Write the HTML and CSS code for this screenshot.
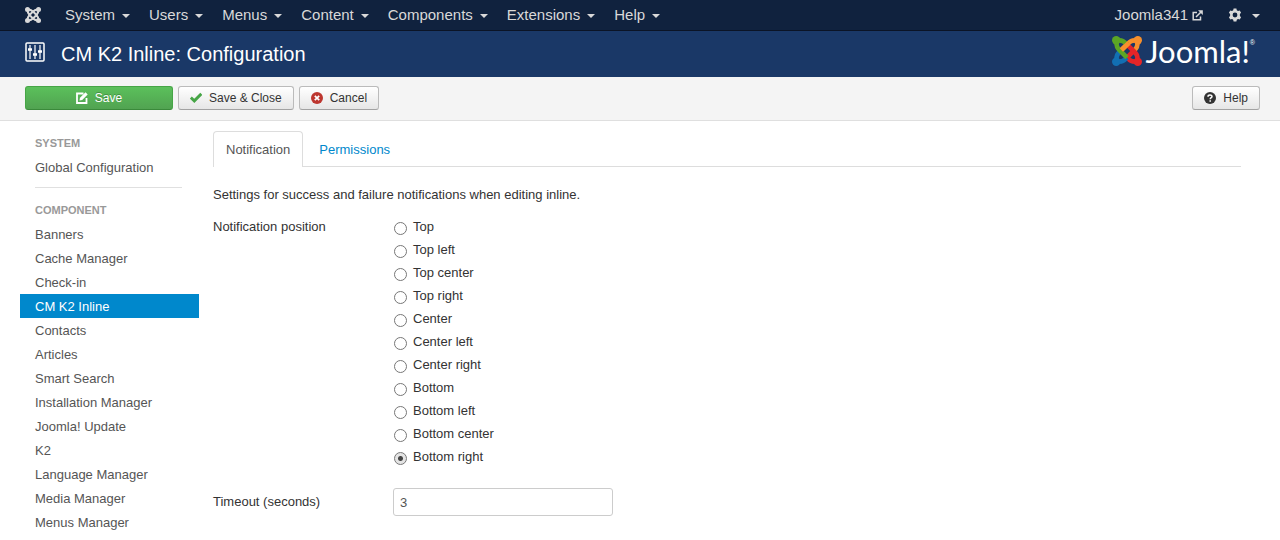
FILE: index.html
```html
<!DOCTYPE html>
<html lang="en">
<head>
<meta charset="utf-8">
<title>CM K2 Inline: Configuration</title>
<link rel="stylesheet" href="styles.css">
</head>
<body>
<nav class="navbar" aria-label="Main">
  <a class="brand" href="#" aria-label="Joomla">
    <svg class="brand-icon" viewBox="0 0 32 32" fill="none" stroke="currentColor" stroke-width="4">
      <path d="M5 5C5 11 6 13 9 16L17 24M27 5C21 5 19 6 16 9L8 17M27 27C27 21 26 19 23 16L15 8M5 27C11 27 13 26 16 23L24 15"/>
      <path d="M5 5C10 5 13 6 16 9M27 5C27 10 26 13 23 16M27 27C22 27 19 26 16 23M5 27C5 22 6 19 9 16"/>
      <g fill="currentColor" stroke="none"><circle cx="5" cy="5" r="5"/><circle cx="27" cy="5" r="5"/><circle cx="27" cy="27" r="5"/><circle cx="5" cy="27" r="5"/></g>
    </svg>
  </a>
  <a class="menu" href="#">System</a>
  <a class="menu" href="#">Users</a>
  <a class="menu" href="#">Menus</a>
  <a class="menu" href="#">Content</a>
  <a class="menu" href="#">Components</a>
  <a class="menu" href="#">Extensions</a>
  <a class="menu" href="#">Help</a>
  <div class="nav-right">
    <a class="site-link" href="#">Joomla341
      <svg class="out-icon" viewBox="0 0 11 11" fill="none" stroke="currentColor" stroke-width="1.5"><path d="M5 2.5H1.2v7.3h7.3V6.5M4 7L9 2"/><path d="M6 .2h4.8V5z" fill="currentColor" stroke="none"/></svg>
    </a>
    <a class="menu" href="#" aria-label="Settings">
      <svg class="gear-icon" viewBox="0 0 14 14"><path fill="currentColor" fill-rule="evenodd" d="M5.6.5h2.8l.4 1.7 1.2.7 1.7-.5 1.4 2.4L11.900 6v2l1.2 1.200-1.400 2.400-1.700-.5-1.200.7-.4 1.700H5.600l-.4-1.700-1.200-.7-1.700.5L.9 9.200 2.100 8V6L.9 4.800l1.400-2.400 1.700.5 1.200-.7zM7 4.600a2.400 2.400 0 1 0 0 4.800 2.400 2.400 0 0 0 0-4.800z"/></svg>
    </a>
  </div>
</nav>
<header class="header">
  <svg class="equalizer" viewBox="0 0 20 20" fill="none" stroke="currentColor"><rect x="1" y="1" width="18" height="18" rx="1" stroke-width="1.5"/><path d="M5 3v14M10 3v14M15 3v14" stroke-width="1.200"/><path d="M3 7.500h4M8 12.500h4M13 9.500h4" stroke-width="2.400"/></svg>
  <h1>CM K2 Inline: Configuration</h1>
  <a class="logo" href="#">
    <svg class="logo-mark" viewBox="0 0 32 32" fill="none" stroke-width="5">
      <g stroke="#f8902c"><path d="M27 5C21 4 19 6 16 9L9 16"/><path d="M27 5C28 11 26 13 23 16"/></g>
      <g stroke="#e42528"><path d="M27 27C28 21 26 19 23 16L17 10"/><path d="M27 27C21 28 19 26 16 23"/></g>
      <g stroke="#126fb3"><path d="M5 27C11 28 13 26 16 23"/><path d="M5 27C4 21 6 19 9 16"/></g>
      <path d="M16 23L23 16" stroke="#e42528"/>
      <g stroke="#5ba525"><path d="M5 5C4 11 6 13 9 16L16 23"/><path d="M5 5C11 4 13 6 16 9"/></g>
      <path d="M18 7.500L10 15" stroke="#f8902c"/>
      <circle cx="4.500" cy="4.500" r="4.500" fill="#5ba525"/>
      <circle cx="27.500" cy="4.500" r="4.500" fill="#f8902c"/>
      <circle cx="27.500" cy="27.500" r="4.500" fill="#e42528"/>
      <circle cx="4.500" cy="27.500" r="4.500" fill="#126fb3"/>
    </svg>
    <span class="logo-text">Joomla!</span><span class="logo-reg">®</span>
  </a>
</header>
<div class="toolbar">
  <button class="btn btn-save" type="button">
    <svg class="btn-icon" viewBox="0 0 12 12" fill="none" stroke="currentColor"><path d="M7.500 1.500H1v9.500h9.500V6" stroke-width="1.800"/><path d="M3.500 8.500l.5-2.700L9.500.3l2.200 2.200L6.200 8z" fill="currentColor" stroke="none"/></svg>Save</button>
  <button class="btn" type="button">
    <svg class="btn-icon green" viewBox="0 0 12 12"><path d="M.8 5.600L4.300 8.900 11.300 1.900" fill="none" stroke="currentColor" stroke-width="2.900"/></svg>Save &amp; Close</button>
  <button class="btn" type="button">
    <svg class="btn-icon red" viewBox="0 0 12 12"><circle cx="6" cy="6" r="6" fill="currentColor"/><path d="M3.800 3.800l4.400 4.400M8.200 3.800L3.800 8.200" stroke="#fff" stroke-width="1.700"/></svg>Cancel</button>
  <button class="btn btn-help" type="button">
    <svg class="btn-icon" viewBox="0 0 12 12"><circle cx="6" cy="6" r="6" fill="currentColor"/><path d="M4 4.700C4 2.500 8 2.500 8 4.600 8 5.800 6.200 5.700 6.200 7.300M6.200 8.200v1.500" fill="none" stroke="#fff" stroke-width="1.500"/></svg>Help</button>
</div>
<div class="content">
  <nav class="sidebar" aria-label="Components">
    <h2>System</h2>
    <a href="#">Global Configuration</a>
    <hr>
    <h2>Component</h2>
    <a href="#">Banners</a>
    <a href="#">Cache Manager</a>
    <a href="#">Check-in</a>
    <a class="active" href="#">CM K2 Inline</a>
    <a href="#">Contacts</a>
    <a href="#">Articles</a>
    <a href="#">Smart Search</a>
    <a href="#">Installation Manager</a>
    <a href="#">Joomla! Update</a>
    <a href="#">K2</a>
    <a href="#">Language Manager</a>
    <a href="#">Media Manager</a>
    <a href="#">Menus Manager</a>
  </nav>
  <main class="main">
    <div class="tabs">
      <a class="tab active" href="#">Notification</a>
      <a class="tab" href="#">Permissions</a>
    </div>
    <p class="intro">Settings for success and failure notifications when editing inline.</p>
    <form>
      <div class="field" role="radiogroup" aria-labelledby="position-label">
        <span class="field-label" id="position-label">Notification position</span>
        <div class="radios">
          <label><input type="radio" name="position">Top</label>
          <label><input type="radio" name="position">Top left</label>
          <label><input type="radio" name="position">Top center</label>
          <label><input type="radio" name="position">Top right</label>
          <label><input type="radio" name="position">Center</label>
          <label><input type="radio" name="position">Center left</label>
          <label><input type="radio" name="position">Center right</label>
          <label><input type="radio" name="position">Bottom</label>
          <label><input type="radio" name="position">Bottom left</label>
          <label><input type="radio" name="position">Bottom center</label>
          <label><input type="radio" name="position" checked>Bottom right</label>
        </div>
      </div>
      <div class="field field-text">
        <label class="field-label" for="timeout">Timeout (seconds)</label>
        <input class="text-input" id="timeout" type="text" value="3">
      </div>
    </form>
  </main>
</div>
</body>
</html>
```
FILE: styles.css
```css
* { box-sizing: border-box; }
body {
  margin: 0;
  background: #fff;
  color: #333;
  font: 13px/18px "Liberation Sans", Arial, sans-serif;
}
a { text-decoration: none; }

.navbar {
  display: flex;
  align-items: center;
  gap: 19px;
  height: 31px;
  padding: 0 20px 0 25px;
  background: #10223e;
  border-bottom: 1px solid #0b1426;
  font-size: 15px;
}
.navbar a { color: #d9d9d9; }
.brand { display: flex; margin-right: 5px; }
.brand-icon { width: 16px; height: 16px; }
.menu { display: flex; align-items: center; gap: 7px; }
.menu::after {
  content: "";
  margin-top: 2px;
  border: 4px solid transparent;
  border-top-color: currentColor;
  border-bottom: 0;
}
.nav-right { display: flex; align-items: center; gap: 25px; margin-left: auto; }
.nav-right .menu { gap: 10px; }
.site-link { display: flex; align-items: center; gap: 4px; }
.out-icon { width: 11px; height: 11px; }
.gear-icon { width: 14px; height: 14px; }

.header {
  display: flex;
  align-items: center;
  height: 46px;
  padding: 0 25px;
  background: #1a3867;
  color: #fff;
}
.equalizer { width: 20px; height: 20px; margin: 0 16px 4px 0; }
.header h1 { margin: 0; font-size: 20px; font-weight: normal; line-height: 24px; }
.logo { display: flex; align-items: center; margin: 0 0 6px auto; color: #fff; }
.logo-mark { width: 30px; height: 30px; margin-right: 4px; }
.logo-text { font: 31px/30px Lato, sans-serif; }
.logo-reg { align-self: flex-start; font-size: 7px; line-height: 14px; }

.toolbar {
  display: flex;
  gap: 5px;
  padding: 9px 20px 10px 25px;
  background: #f4f4f4;
  border-bottom: 1px solid #dfdfdf;
}
.btn {
  display: flex;
  align-items: center;
  justify-content: center;
  gap: 7px;
  height: 24px;
  padding: 0 11px;
  border: 1px solid #bbb;
  border-bottom-color: #a2a2a2;
  border-radius: 3px;
  background: linear-gradient(#fff, #e6e6e6);
  color: #333;
  font: 12px/22px "Liberation Sans", Arial, sans-serif;
}
.btn-save {
  width: 148px;
  border-color: #46a546 #46a546 #3a8a3a;
  background: linear-gradient(#5bc05b, #51a351);
  color: #fff;
  text-shadow: 0 -1px 0 rgba(0, 0, 0, .25);
}
.btn-icon { width: 12px; height: 12px; margin-bottom: 1px; }
.btn-help { margin-left: auto; }
.green { color: #46a546; }
.red { color: #bd362f; }

.content { display: flex; gap: 14px; padding: 10px 39px 6px 20px; }
.sidebar { flex: 0 0 179px; }
.sidebar h2 {
  margin: 0;
  padding: 0 15px;
  color: #999;
  font-size: 11px;
  line-height: 24px;
  text-transform: uppercase;
}
.sidebar a { display: block; padding: 4px 15px 2px; color: #555; }
.sidebar a.active { background: #08c; color: #fff; }
.sidebar hr { height: 1px; margin: 8px 17px 10px 15px; border: 0; background: #e0e0e0; }

.main { flex: 1; min-width: 0; }
.tabs { display: flex; gap: 3px; border-bottom: 1px solid #ddd; }
.tab {
  margin-bottom: -1px;
  padding: 9px 12px 8px;
  border: 1px solid transparent;
  border-bottom: 0;
  border-radius: 4px 4px 0 0;
  color: #08c;
}
.tab.active { border-color: #ddd; background: #fff; color: #555; }
.intro { margin: 19px 0 14px; }
.field { display: flex; }
.field-label { flex: 0 0 180px; }
.radios { display: flex; flex-direction: column; gap: 5px; }
.radios label { display: flex; align-items: center; gap: 6px; }
.radios input {
  appearance: none;
  width: 13px;
  height: 13px;
  margin: 3px 0 0 1px;
  border: 1px solid #777;
  border-radius: 50%;
  background: #fff;
}
.radios input:checked { background: radial-gradient(circle, #444 0 2px, #e4e4e4 3px); }
.field-text { align-items: center; margin-top: 22px; }
.text-input {
  width: 220px;
  height: 28px;
  padding: 4px 6px;
  border: 1px solid #ccc;
  border-radius: 3px;
  color: #555;
  font: 13px/18px "Liberation Sans", Arial, sans-serif;
}
```
